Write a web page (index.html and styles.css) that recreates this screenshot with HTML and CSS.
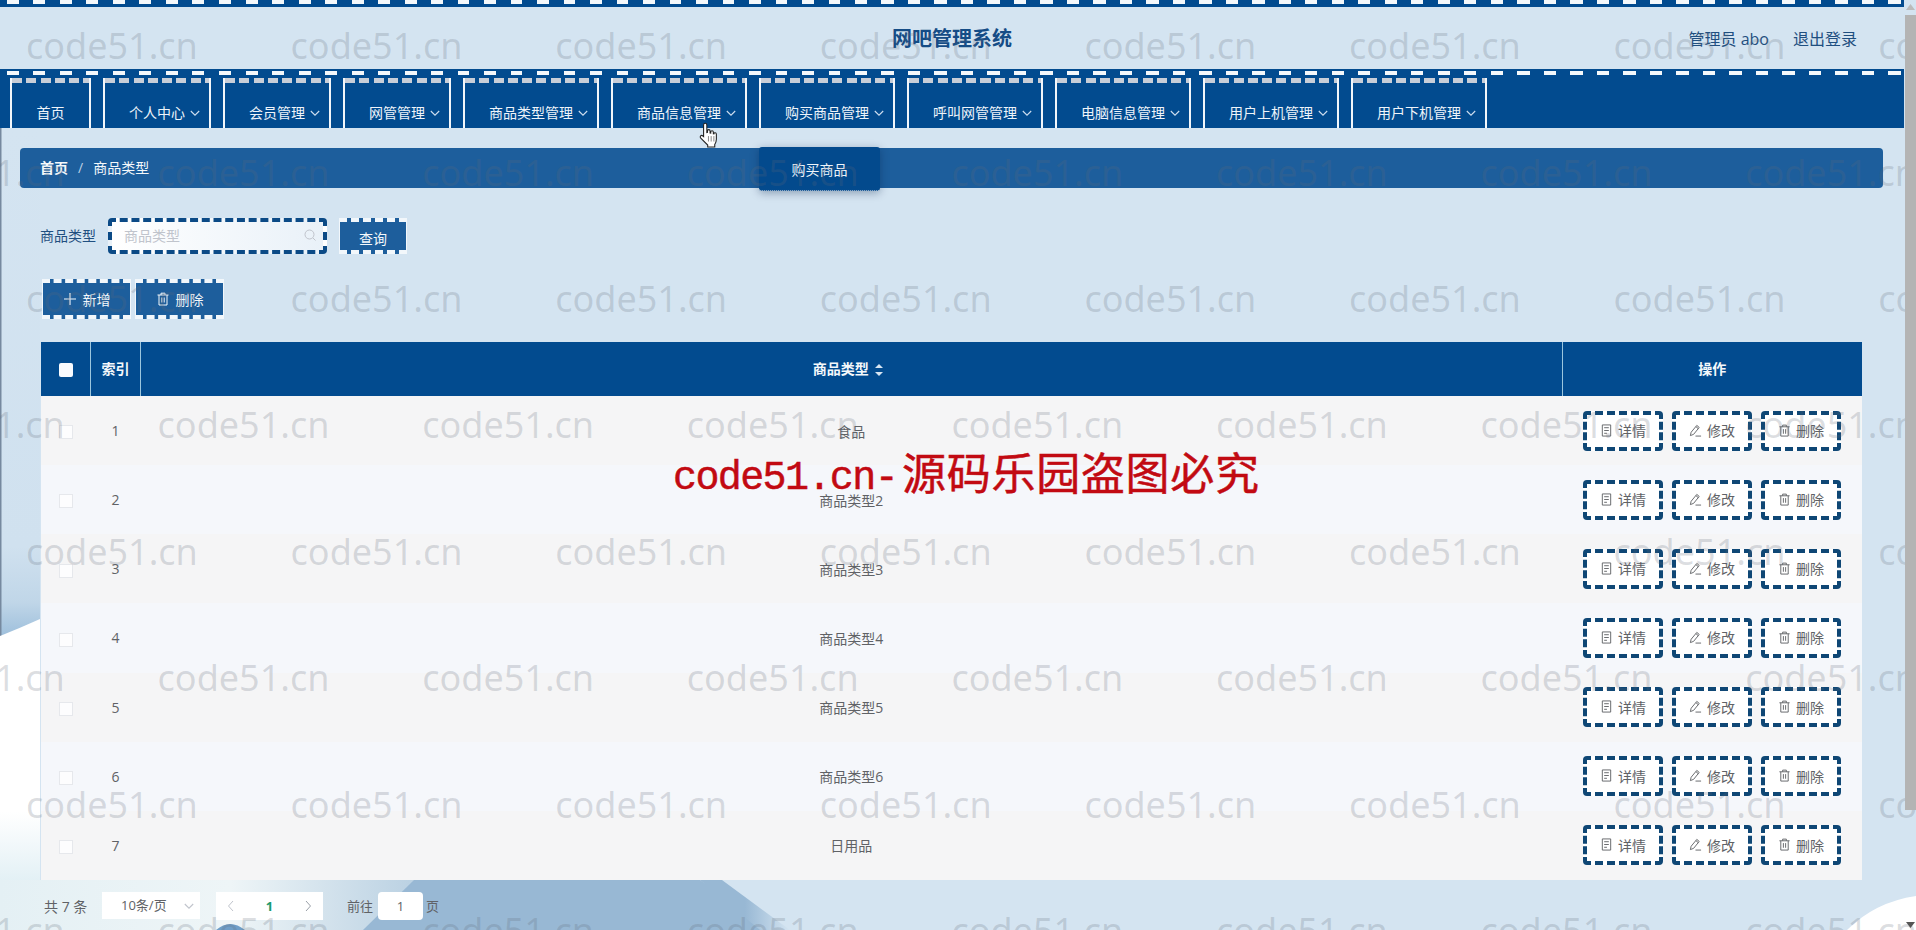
FILE: index.html
```html
<!doctype html>
<html lang="zh">
<head>
<meta charset="utf-8">
<title>网吧管理系统</title>
<link rel="stylesheet" href="styles.css">
</head>
<body>

<svg width="0" height="0" class="defs">
  <symbol id="i-doc" viewBox="0 0 14 14"><path d="M2.5 1h9v12h-9zM4.5 4h5M4.5 7h5M4.5 10h3" fill="none" stroke="currentColor"/></symbol>
  <symbol id="i-edit" viewBox="0 0 14 14"><path d="M1.5 12.5l.8-3.6L8.4 1.5l2.6 2.2-6 7.4zM7.4 2.8l2.6 2.2M7 13h6" fill="none" stroke="currentColor"/></symbol>
  <symbol id="i-del" viewBox="0 0 14 14"><path d="M1.5 3h11M5 3V1.2h4V3M3 3v10h8V3M5.8 5.5v5M8.2 5.5v5" fill="none" stroke="currentColor"/></symbol>
  <symbol id="i-plus" viewBox="0 0 14 14"><path d="M7 1v12M1 7h12" fill="none" stroke="currentColor" stroke-width="1.2"/></symbol>
  <symbol id="i-down" viewBox="0 0 10 10"><path d="M.8 3l4.2 4.2L9.2 3" fill="none" stroke="currentColor" stroke-width="1.1"/></symbol>
</svg>

<!-- background picture of the page -->
<svg class="backdrop" width="1916" height="930" viewBox="0 0 1916 930">
  <defs>
    <linearGradient id="g-sky" x1="0" y1="0" x2="0" y2="1">
      <stop offset="0" stop-color="#d4e4f1"/><stop offset=".82" stop-color="#d0e1ef"/><stop offset=".93" stop-color="#c0d6e8"/><stop offset="1" stop-color="#9cbedb"/>
    </linearGradient>
    <linearGradient id="g-snow" x1="0" y1="0" x2="0" y2="1">
      <stop offset="0" stop-color="#fff"/><stop offset=".62" stop-color="#fff"/><stop offset="1" stop-color="#cfe6ee"/>
    </linearGradient>
    <linearGradient id="g-fade" x1="0" y1="0" x2="1" y2="0">
      <stop offset="0" stop-color="#e4f0f4"/><stop offset=".55" stop-color="#eef5f7"/><stop offset="1" stop-color="#b9d0e2"/>
    </linearGradient>
    <linearGradient id="g-edge" x1="0" y1="0" x2="1" y2="0">
      <stop offset="0" stop-color="#98b8d4"/><stop offset=".5" stop-color="#98b8d4"/><stop offset="1" stop-color="#d4e4f1"/>
    </linearGradient>
  </defs>
  <rect width="1916" height="930" fill="#d4e4f1"/>
  <rect x="0" y="128" width="40" height="510" fill="url(#g-sky)"/>
  <rect x="0" y="128" width="1.5" height="508" fill="#76899f"/>
  <path d="M0 636Q20 628 40 619V930H0z" fill="url(#g-snow)"/>
  <rect x="0" y="880" width="420" height="50" fill="url(#g-fade)"/>
  <path d="M216 930Q230 918 245 930z" fill="#6f9ec8"/>
  <path d="M414 880H700L775 930H363z" fill="#98b8d4"/>
  <path d="M700 880H722L790 930H760z" fill="url(#g-edge)"/>
  <path d="M1847 930Q1875 902 1916 896V930z" fill="#fff"/>
</svg>

<div class="page">
  <div class="stitch-bar"></div>

  <header class="site-head">
    <span></span>
    <h1>网吧管理系统</h1>
    <div class="user-box"><span>管理员 abo</span><a>退出登录</a></div>
  </header>

  <nav class="main-nav">
    <ul>
      <li class="plain">首页</li>
      <li>个人中心<svg class="arrow"><use href="#i-down"/></svg></li>
      <li>会员管理<svg class="arrow"><use href="#i-down"/></svg></li>
      <li>网管管理<svg class="arrow"><use href="#i-down"/></svg></li>
      <li>商品类型管理<svg class="arrow"><use href="#i-down"/></svg></li>
      <li>商品信息管理<svg class="arrow"><use href="#i-down"/></svg></li>
      <li>购买商品管理<svg class="arrow"><use href="#i-down"/></svg>
        <div class="drop">购买商品</div>
      </li>
      <li>呼叫网管管理<svg class="arrow"><use href="#i-down"/></svg></li>
      <li>电脑信息管理<svg class="arrow"><use href="#i-down"/></svg></li>
      <li>用户上机管理<svg class="arrow"><use href="#i-down"/></svg></li>
      <li>用户下机管理<svg class="arrow"><use href="#i-down"/></svg></li>
    </ul>
  </nav>

  <div class="crumb"><b>首页</b><i>/</i><span>商品类型</span></div>

  <form class="search-row">
    <label>商品类型</label>
    <div class="search-input">
      <span>商品类型</span>
      <svg width="14" height="14" viewBox="0 0 14 14"><circle cx="6.5" cy="6.5" r="4.5" fill="none" stroke="#c0c4cc"/><path d="M10 10l2.5 2.5" stroke="#c0c4cc"/></svg>
    </div>
    <button type="button" class="btn-blue btn-query">查询</button>
  </form>

  <div class="tool-row">
    <button type="button" class="btn-blue"><svg class="ico"><use href="#i-plus"/></svg>新增</button>
    <button type="button" class="btn-blue"><svg class="ico"><use href="#i-del"/></svg>删除</button>
  </div>

  <table class="data">
    <colgroup><col class="c-check"><col class="c-index"><col><col class="c-ops"></colgroup>
    <thead>
      <tr>
        <th><span class="check on"></span></th>
        <th>索引</th>
        <th class="th-name">商品类型<span class="sort"></span></th>
        <th>操作</th>
      </tr>
    </thead>
    <tbody>
      <tr>
        <td><span class="check"></span></td><td>1</td><td>食品</td>
        <td><div class="ops"><a><svg class="ico"><use href="#i-doc"/></svg>详情</a><a><svg class="ico"><use href="#i-edit"/></svg>修改</a><a><svg class="ico"><use href="#i-del"/></svg>删除</a></div></td>
      </tr>
      <tr>
        <td><span class="check"></span></td><td>2</td><td>商品类型2</td>
        <td><div class="ops"><a><svg class="ico"><use href="#i-doc"/></svg>详情</a><a><svg class="ico"><use href="#i-edit"/></svg>修改</a><a><svg class="ico"><use href="#i-del"/></svg>删除</a></div></td>
      </tr>
      <tr>
        <td><span class="check"></span></td><td>3</td><td>商品类型3</td>
        <td><div class="ops"><a><svg class="ico"><use href="#i-doc"/></svg>详情</a><a><svg class="ico"><use href="#i-edit"/></svg>修改</a><a><svg class="ico"><use href="#i-del"/></svg>删除</a></div></td>
      </tr>
      <tr>
        <td><span class="check"></span></td><td>4</td><td>商品类型4</td>
        <td><div class="ops"><a><svg class="ico"><use href="#i-doc"/></svg>详情</a><a><svg class="ico"><use href="#i-edit"/></svg>修改</a><a><svg class="ico"><use href="#i-del"/></svg>删除</a></div></td>
      </tr>
      <tr>
        <td><span class="check"></span></td><td>5</td><td>商品类型5</td>
        <td><div class="ops"><a><svg class="ico"><use href="#i-doc"/></svg>详情</a><a><svg class="ico"><use href="#i-edit"/></svg>修改</a><a><svg class="ico"><use href="#i-del"/></svg>删除</a></div></td>
      </tr>
      <tr>
        <td><span class="check"></span></td><td>6</td><td>商品类型6</td>
        <td><div class="ops"><a><svg class="ico"><use href="#i-doc"/></svg>详情</a><a><svg class="ico"><use href="#i-edit"/></svg>修改</a><a><svg class="ico"><use href="#i-del"/></svg>删除</a></div></td>
      </tr>
      <tr>
        <td><span class="check"></span></td><td>7</td><td>日用品</td>
        <td><div class="ops"><a><svg class="ico"><use href="#i-doc"/></svg>详情</a><a><svg class="ico"><use href="#i-edit"/></svg>修改</a><a><svg class="ico"><use href="#i-del"/></svg>删除</a></div></td>
      </tr>
    </tbody>
  </table>

  <div class="pager">
    <span class="total">共 7 条</span>
    <div class="size">10条/页<svg class="arrow"><use href="#i-down"/></svg></div>
    <div class="pages">
      <svg width="8" height="12" viewBox="0 0 8 12"><path d="M6 1L1.5 6 6 11" fill="none" stroke="#c0c4cc"/></svg>
      <b>1</b>
      <svg width="8" height="12" viewBox="0 0 8 12"><path d="M2 1l4.5 5L2 11" fill="none" stroke="#9aa0a8"/></svg>
    </div>
    <span class="goto">前往</span>
    <div class="jump">1</div>
    <span>页</span>
  </div>
</div>

<!-- repeated site mark, lies over everything -->
<div class="marks">
  <div class="m-row"><span>code51.cn</span><span>code51.cn</span><span>code51.cn</span><span>code51.cn</span><span>code51.cn</span><span>code51.cn</span><span>code51.cn</span><span>code51.cn</span></div>
  <div class="m-row alt"><span>code51.cn</span><span>code51.cn</span><span>code51.cn</span><span>code51.cn</span><span>code51.cn</span><span>code51.cn</span><span>code51.cn</span><span>code51.cn</span></div>
  <div class="m-row"><span>code51.cn</span><span>code51.cn</span><span>code51.cn</span><span>code51.cn</span><span>code51.cn</span><span>code51.cn</span><span>code51.cn</span><span>code51.cn</span></div>
  <div class="m-row alt"><span>code51.cn</span><span>code51.cn</span><span>code51.cn</span><span>code51.cn</span><span>code51.cn</span><span>code51.cn</span><span>code51.cn</span><span>code51.cn</span></div>
  <div class="m-row"><span>code51.cn</span><span>code51.cn</span><span>code51.cn</span><span>code51.cn</span><span>code51.cn</span><span>code51.cn</span><span>code51.cn</span><span>code51.cn</span></div>
  <div class="m-row alt"><span>code51.cn</span><span>code51.cn</span><span>code51.cn</span><span>code51.cn</span><span>code51.cn</span><span>code51.cn</span><span>code51.cn</span><span>code51.cn</span></div>
  <div class="m-row"><span>code51.cn</span><span>code51.cn</span><span>code51.cn</span><span>code51.cn</span><span>code51.cn</span><span>code51.cn</span><span>code51.cn</span><span>code51.cn</span></div>
  <div class="m-row alt"><span>code51.cn</span><span>code51.cn</span><span>code51.cn</span><span>code51.cn</span><span>code51.cn</span><span>code51.cn</span><span>code51.cn</span><span>code51.cn</span></div>
</div>
<div class="red-mark">code51.cn-<span>源码乐园盗图必究</span></div>

<svg class="hand" width="22" height="26" viewBox="0 0 20 24">
  <path d="M6.5 1.2c1 0 1.5.7 1.5 1.6v7l.6-.2V8.200c0-1.600 2.400-1.600 2.400 0v2l.6.100V9.200c0-1.500 2.400-1.500 2.400.1v1.500l.5.100c0-1.300 2.300-1.300 2.300.4v4.700c0 2.300-.6 3.400-1.500 4.800v2.200H8.800v-1.700L2.400 15c-1.400-1.600.4-3.400 2-2.100l.6.500V2.800c0-.9.500-1.600 1.500-1.600z" fill="#fff" stroke="#222" stroke-width="1"/>
  <path d="M9.500 13v5M12 13v5M14.500 13v5" stroke="#777" stroke-width=".8"/>
</svg>

<div class="scroll-thumb"></div>
<svg class="scroll-up" width="9" height="6" viewBox="0 0 9 6"><path d="M4.500 0l4.500 6H0z" fill="#bbb"/></svg>
<svg class="scroll-down" width="9" height="6" viewBox="0 0 9 6"><path d="M4.500 6L0 0h9z" fill="#555"/></svg>

</body>
</html>
```

FILE: styles.css
```css
html, body {
  margin: 0;
  height: 930px;
  overflow: hidden;
}
body {
  position: relative;
  font-family: "Open Sans", "Noto Sans CJK SC", sans-serif;
  font-size: 14px;
  color: #606266;
}
button {
  font: inherit;
}
.defs {
  position: absolute;
}
.backdrop {
  position: absolute;
  left: 0;
  top: 0;
  z-index: -1;
}
.page {
  width: 1904px;
}

/* top of page */
.stitch-bar {
  height: 7px;
  background:
    repeating-linear-gradient(90deg, transparent 0 7px, #f4f8fb 7px 19px, transparent 19px 26.5px) 0 0 / 100% 4px no-repeat,
    #024b8f;
}
.site-head {
  height: 62px;
  display: grid;
  grid-template-columns: 1fr auto 1fr;
  align-items: center;
}
.site-head h1 {
  margin: 0 0 -1px;
  font-size: 20px;
  line-height: 26px;
  color: #154c86;
}
.user-box {
  display: flex;
  justify-content: flex-end;
  gap: 24px;
  padding-right: 47px;
  font-size: 16px;
  color: #1f4f80;
}

/* menu */
.main-nav {
  height: 59px;
  padding-top: 9px;
  box-sizing: border-box;
  background:
    repeating-linear-gradient(90deg, transparent 0 7px, #f4f8fb 7px 19px, transparent 19px 26.5px) 0 2px / 100% 4px no-repeat,
    #024b8f;
}
.main-nav ul {
  display: flex;
  gap: 12px;
  margin: 0;
  padding: 0 0 0 10px;
  list-style: none;
}
.main-nav li {
  position: relative;
  box-sizing: border-box;
  height: 50px;
  padding: 24px 9px 0 24px;
  border-left: 2px solid #f2f6fa;
  border-right: 2px solid #f2f6fa;
  background: repeating-linear-gradient(90deg, #c8ced8 0 10px, transparent 10px 14.3px) 0 0 / 100% 5px no-repeat;
  line-height: 22px;
  color: #eef4fa;
  white-space: nowrap;
}
.main-nav li.plain {
  width: 81px;
  padding: 24px 0 0;
  text-align: center;
}
.arrow {
  width: 10px;
  height: 10px;
  margin-left: 5px;
  color: #cfdff0;
}
.drop {
  position: absolute;
  left: -2px;
  top: 69px;
  width: 121px;
  height: 44px;
  line-height: 46px;
  text-align: center;
  border-radius: 3px;
  background: #034a8d;
  box-shadow: 0 2px 8px rgba(0, 30, 70, .35);
  border-bottom: 1px dotted #a9bdd2;
  box-sizing: border-box;
  color: #eef4fa;
}

/* breadcrumb */
.crumb {
  margin: 20px 21px 0 20px;
  height: 40px;
  line-height: 40px;
  padding-left: 20px;
  border-radius: 4px;
  background: #1d5e9c;
  color: #f4f8fb;
}
.crumb b {
  font-weight: 600;
}
.crumb i {
  margin: 0 10px;
  font-style: normal;
  color: #bcd0e4;
}

/* search and tools */
.search-row {
  display: flex;
  align-items: center;
  margin: 30px 0 0 40px;
  height: 36px;
}
.search-row label {
  width: 68px;
  margin-bottom: 3px;
  color: #1f4f80;
}
.search-input {
  box-sizing: border-box;
  width: 219px;
  height: 36px;
  padding: 0 6px 3px 12px;
  display: flex;
  align-items: center;
  justify-content: space-between;
  border: 4px dashed #0b4a86;
  border-radius: 4px;
  background: linear-gradient(90deg, #fff, #e9f1f8);
  color: #c0c4cc;
}
.btn-blue {
  box-sizing: border-box;
  display: inline-flex;
  align-items: center;
  justify-content: center;
  gap: 6px;
  width: 89px;
  height: 40px;
  padding: 0;
  border: solid #f2f7fb;
  border-width: 4px 1px;
  border-style: dashed solid;
  background: #1d5e9c;
  color: #f4f8fb;
}
.btn-query {
  width: 68px;
  height: 36px;
  margin-left: 12px;
  padding-top: 3px;
}
.ico {
  width: 14px;
  height: 14px;
  flex: none;
}
.tool-row {
  display: flex;
  gap: 4px;
  margin: 25px 0 0 42px;
}

/* table */
.data {
  width: 1822px;
  margin: 23px 0 0 40px;
  border-collapse: collapse;
  table-layout: fixed;
  text-align: center;
}
.c-check { width: 50px; }
.c-index { width: 50px; }
.c-ops { width: 300px; }
.data th {
  height: 54px;
  padding: 0 0 2px;
  box-sizing: border-box;
  background: #024b8f;
  color: #f4f8fb;
  font-weight: 700;
  font-size: 14px;
  border-right: 1px solid #9cc6de;
}
.data th:first-child {
  border-left: 1px solid #d4e4f1;
}
.data th:last-child {
  border-right: 0;
}
.data th.th-name {
  padding-right: 7px;
}
.data td {
  height: 69.14px;
  padding: 0;
  font-size: 14px;
}
.data tbody tr:nth-child(odd) {
  background: #f5f5f6;
}
.data tbody tr:nth-child(even) {
  background: #f5f7fb;
}
.check {
  display: inline-block;
  box-sizing: border-box;
  width: 14px;
  height: 14px;
  vertical-align: middle;
  border: 1px solid #e6e8ec;
  background: #fdfdfe;
}
.check.on {
  border: 0;
  border-radius: 2px;
  background: #f8fbff;
}
.sort {
  display: inline-block;
  margin-left: 6px;
  width: 0;
  height: 10px;
  vertical-align: -1px;
  border-left: 4px solid transparent;
  border-right: 4px solid transparent;
  position: relative;
}
.sort::before, .sort::after {
  content: "";
  position: absolute;
  left: -4px;
  border-left: 4px solid transparent;
  border-right: 4px solid transparent;
}
.sort::before {
  top: -1px;
  border-bottom: 4px solid #d8e6f2;
}
.sort::after {
  bottom: -1px;
  border-top: 4px solid #d8e6f2;
}
.ops {
  display: flex;
  gap: 9px;
  padding-left: 21px;
}
.ops a {
  box-sizing: border-box;
  width: 80px;
  height: 40px;
  padding-bottom: 1px;
  display: flex;
  align-items: center;
  justify-content: center;
  gap: 5px;
  border: 4px dashed #0f4775;
  border-radius: 4px;
  background: #fff;
  color: #606266;
}
.ops .ico {
  width: 13px;
  height: 13px;
}

/* pagination */
.pager {
  display: flex;
  align-items: center;
  height: 28px;
  margin: 12px 0 0 44px;
  font-size: 13px;
}
.total {
  width: 58px;
  font-size: 14px;
}
.size {
  box-sizing: border-box;
  width: 98px;
  height: 27px;
  padding-left: 19px;
  line-height: 27px;
  background: #fff;
  position: relative;
}
.size .arrow {
  position: absolute;
  right: 6px;
  top: 9px;
  color: #c0c4cc;
}
.pages {
  box-sizing: border-box;
  width: 107px;
  height: 28px;
  margin: 0 24px 0 16px;
  padding: 0 11px;
  display: flex;
  align-items: center;
  justify-content: space-between;
  background: #fff;
}
.pages b {
  color: #1a9a6e;
}
.goto {
  width: 31px;
}
.jump {
  width: 45px;
  height: 28px;
  line-height: 28px;
  margin-right: 3px;
  text-align: center;
  border-radius: 4px;
  background: #fff;
}

/* marks */
.marks {
  position: absolute;
  left: 0;
  top: -17px;
  width: 1916px;
  height: 947px;
  overflow: hidden;
  pointer-events: none;
}
.m-row {
  display: flex;
  height: 126.4px;
  align-items: center;
  margin-left: 26px;
}
.m-row.alt {
  margin-left: -107px;
}
.m-row span {
  flex: none;
  width: 264.6px;
  font-family: "Noto Sans", sans-serif;
  font-size: 36px;
  line-height: 40px;
  color: rgba(95, 105, 120, .22);
}
.red-mark {
  position: absolute;
  left: 673px;
  top: 444px;
  font-family: "Liberation Mono", monospace;
  font-size: 40px;
  letter-spacing: -1.6px;
  line-height: 54px;
  color: #c20a12;
  -webkit-text-stroke: .5px #c20a12;
  white-space: nowrap;
  pointer-events: none;
}
.red-mark span {
  font-family: "Noto Sans CJK SC", sans-serif;
  font-size: 44px;
  margin-left: 5px;
  letter-spacing: .7px;
  vertical-align: -1px;
}
.hand {
  position: absolute;
  left: 698px;
  top: 122px;
}
.scroll-thumb {
  position: absolute;
  left: 1905px;
  top: 15px;
  width: 11px;
  height: 795px;
  background: #b4b4b4;
}
.scroll-up {
  position: absolute;
  left: 1906px;
  top: 4px;
}
.scroll-down {
  position: absolute;
  left: 1906px;
  top: 922px;
}
```
